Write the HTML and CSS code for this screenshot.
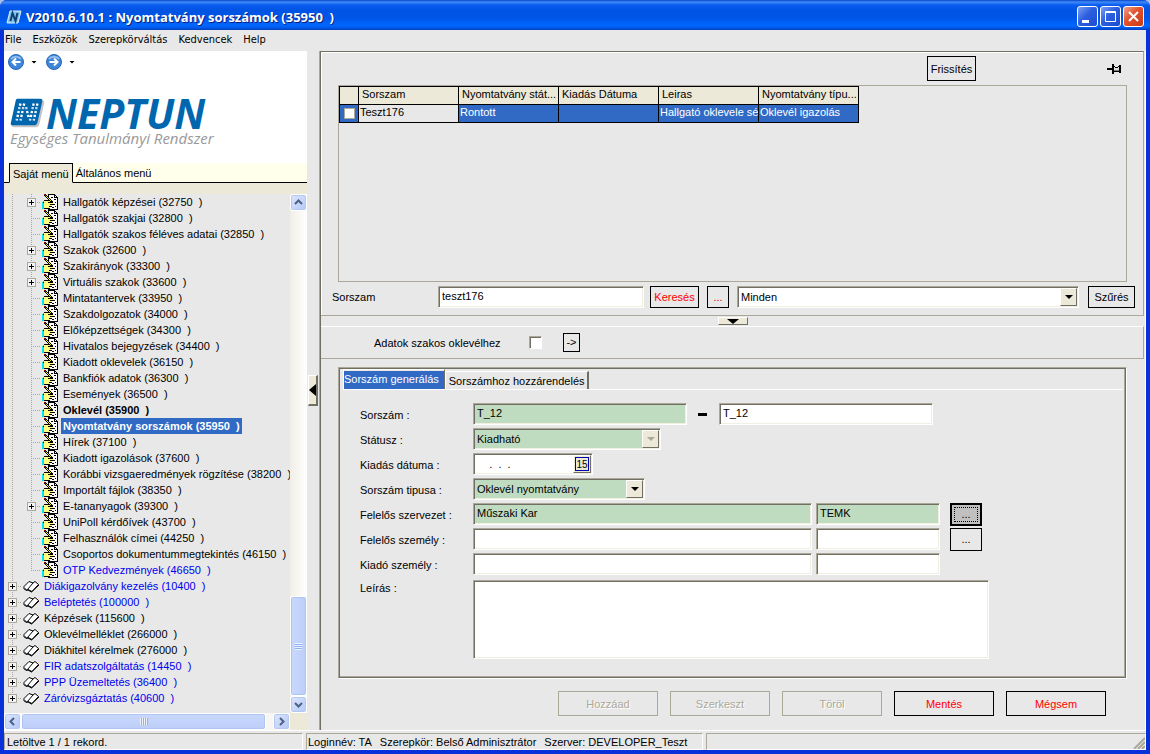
FILE: index.html
```html
<!DOCTYPE html>
<html lang="hu">
<head>
<meta charset="utf-8">
<title>Nyomtatvány sorszámok</title>
<link rel="stylesheet" href="styles.css">
</head>
<body>
<svg class="defs" width="0" height="0" aria-hidden="true">
  <symbol id="form" viewBox="0 0 18 16">
    <g shape-rendering="crispEdges">
      <path d="M7 0H14V1H15V2H16V3H17V16H7Z" fill="#000"/>
      <path d="M8 1H13V4H16V15H8Z" fill="#fff"/>
      <path d="M14 2H15V3H14Z" fill="#fff"/>
      <path d="M13 5h2v1h-2zM14 8h1v1h-1zM12 10h2v1h-2zM14 12h1v1h-1zM11 13h2v1h-2zM10 3h2v1h-2z" fill="#000"/>
      <path d="M3 7H9V8H12V9H13V11H11V13H9V14H3Z" fill="#ffff80"/>
      <path d="M1 8H2V7H3V15H1Z" fill="#00e5ee"/>
      <path d="M3 6h4v1H3zM7 8h5v1H7zM9 10h4v1H9zM8 12h3v1H8zM3 14h6v1H3zM2 8h1v1H2z" fill="#000"/>
      <path d="M3 0h2v1h1v1h1v1h1v1h1v1h1v1h1v1h1v2h-2v-1h-1v-1h-1v-1h-1v-1h-1v-1h-1v-1h-1v-1h-1z" fill="#000"/>
      <path d="M5 2h1v1h1v1h1v1h1v1h1v1h-1v-1h-1v-1h-1v-1h-1v-1h-1z" fill="#ffe800"/>
      <path d="M3 0h1v1h1v1h-1v-1h-1z" fill="#c00020"/>
    </g>
  </symbol>
  <symbol id="book" viewBox="0 0 18 16">
    <path d="M1.500 9L7 3.500L11 5L13 3.500L16.500 6.500L10 13.500L6 11.500L4.500 12Z" fill="#fff" stroke="#000"/>
    <path d="M11 5L5.500 11.500M1.500 10.500L4.500 12.500L6 12L9.500 14L17 7" fill="none" stroke="#000"/>
  </symbol>
  <symbol id="chev" viewBox="0 0 9 9"><path d="M1 6L4.500 2.500L8 6" fill="none" stroke="#4d6185" stroke-width="2"/></symbol>
</svg>

<div class="window">
  <header class="titlebar">
    <svg class="app-icon" viewBox="0 0 16 14" aria-hidden="true"><path d="M4 1H15L12 13H1Z" fill="#7cc4e8" stroke="#d8f0fa"/><path d="M4.500 11L6.500 3L9.500 11L11.500 3" fill="none" stroke="#123f78" stroke-width="2"/></svg>
    <h1>V2010.6.10.1 : Nyomtatvány sorszámok (35950&nbsp;&nbsp;)</h1>
    <div class="win-buttons">
      <button aria-label="Kis méret"><svg viewBox="0 0 19 19"><path d="M4 14.500h7" stroke="#fff" stroke-width="3"/></svg></button>
      <button aria-label="Teljes méret"><svg viewBox="0 0 19 19"><path d="M4.500 4.500h10v10h-10zM4 5.500h11" fill="none" stroke="#fff"/></svg></button>
      <button class="close" aria-label="Bezárás"><svg viewBox="0 0 19 19"><path d="M5 5l9 9M14 5l-9 9" stroke="#fff" stroke-width="2"/></svg></button>
    </div>
  </header>

  <div class="client">
    <nav class="menubar">
      <button>File</button><button>Eszközök</button><button>Szerepkörváltás</button><button>Kedvencek</button><button>Help</button>
    </nav>

    <div class="main">
      <aside class="sidebar">
        <div class="brand">
          <div class="history">
            <button aria-label="Vissza"><svg width="16" height="16" viewBox="0 0 16 16"><circle cx="8" cy="8" r="7.500" fill="#3d86d8" stroke="#2a66b8"/><path d="M3 5a6 5 0 0 1 10 0" fill="none" stroke="#8fbff0" stroke-width="2"/><path d="M12.500 8H5M8 4.500L4.500 8L8 11.500" fill="none" stroke="#fff" stroke-width="2"/></svg></button>
            <i class="tri"></i>
            <button aria-label="Előre"><svg width="16" height="16" viewBox="0 0 16 16"><circle cx="8" cy="8" r="7.500" fill="#3d86d8" stroke="#2a66b8"/><path d="M3 5a6 5 0 0 1 10 0" fill="none" stroke="#8fbff0" stroke-width="2"/><path d="M3.500 8H11M8 4.500L11.500 8L8 11.500" fill="none" stroke="#fff" stroke-width="2"/></svg></button>
            <i class="tri"></i>
          </div>
          <div class="logo">
            <svg width="36" height="32" viewBox="0 0 38 32" aria-hidden="true">
              <path d="M9 3H34Q37 3 36 6L31 28Q30 31 27 31H4Q1 31 2 28Z" fill="#c4c4c8"/>
              <path d="M8 1H32Q35 1 34 4L29 26Q28 29 25 29H3Q0 29 1 26L6 3Q6 1 8 1Z" fill="#0066ae"/>
              <g fill="none" stroke="#fff" stroke-width="2.500" stroke-dasharray="2.500 1.500">
                <path d="M11 6L7 24M15 6L11 24M25 6L21 24M29 6L25 24M17 10L20 22"/>
              </g>
              <path d="M8 12H30M7 17H28M6 22H27" stroke="#0066ae"/>
            </svg>
            <strong>NEPTUN</strong>
          </div>
          <p>Egységes Tanulmányi Rendszer</p>
        </div>
        <div class="side-tabs" role="tablist">
          <button role="tab" aria-selected="true">Saját menü</button><button role="tab">Általános menü</button>
        </div>
        <div class="side-strip"></div>
        <div class="tree-area">
          <ul class="tree">
            <li><i class="c1"></i><i class="c2"><button aria-label="Kibontás"></button></i><svg><use href="#form"/></svg><a href="#">Hallgatók képzései (32750&nbsp;&nbsp;)</a></li>
            <li><i class="c1"></i><i class="c2"></i><svg><use href="#form"/></svg><a href="#">Hallgatók szakjai (32800&nbsp;&nbsp;)</a></li>
            <li><i class="c1"></i><i class="c2"></i><svg><use href="#form"/></svg><a href="#">Hallgatók szakos féléves adatai (32850&nbsp;&nbsp;)</a></li>
            <li><i class="c1"></i><i class="c2"><button aria-label="Kibontás"></button></i><svg><use href="#form"/></svg><a href="#">Szakok (32600&nbsp;&nbsp;)</a></li>
            <li><i class="c1"></i><i class="c2"><button aria-label="Kibontás"></button></i><svg><use href="#form"/></svg><a href="#">Szakirányok (33300&nbsp;&nbsp;)</a></li>
            <li><i class="c1"></i><i class="c2"><button aria-label="Kibontás"></button></i><svg><use href="#form"/></svg><a href="#">Virtuális szakok (33600&nbsp;&nbsp;)</a></li>
            <li><i class="c1"></i><i class="c2"></i><svg><use href="#form"/></svg><a href="#">Mintatantervek (33950&nbsp;&nbsp;)</a></li>
            <li><i class="c1"></i><i class="c2"></i><svg><use href="#form"/></svg><a href="#">Szakdolgozatok (34000&nbsp;&nbsp;)</a></li>
            <li><i class="c1"></i><i class="c2"></i><svg><use href="#form"/></svg><a href="#">Előképzettségek (34300&nbsp;&nbsp;)</a></li>
            <li><i class="c1"></i><i class="c2"></i><svg><use href="#form"/></svg><a href="#">Hivatalos bejegyzések (34400&nbsp;&nbsp;)</a></li>
            <li><i class="c1"></i><i class="c2"></i><svg><use href="#form"/></svg><a href="#">Kiadott oklevelek (36150&nbsp;&nbsp;)</a></li>
            <li><i class="c1"></i><i class="c2"></i><svg><use href="#form"/></svg><a href="#">Bankfiók adatok (36300&nbsp;&nbsp;)</a></li>
            <li><i class="c1"></i><i class="c2"></i><svg><use href="#form"/></svg><a href="#">Események (36500&nbsp;&nbsp;)</a></li>
            <li><i class="c1"></i><i class="c2"></i><svg><use href="#form"/></svg><a href="#" class="bold">Oklevél (35900&nbsp;&nbsp;)</a></li>
            <li><i class="c1"></i><i class="c2"></i><svg><use href="#form"/></svg><a href="#" class="bold selected">Nyomtatvány sorszámok (35950&nbsp;&nbsp;)</a></li>
            <li><i class="c1"></i><i class="c2"></i><svg><use href="#form"/></svg><a href="#">Hírek (37100&nbsp;&nbsp;)</a></li>
            <li><i class="c1"></i><i class="c2"></i><svg><use href="#form"/></svg><a href="#">Kiadott igazolások (37600&nbsp;&nbsp;)</a></li>
            <li><i class="c1"></i><i class="c2"></i><svg><use href="#form"/></svg><a href="#">Korábbi vizsgaeredmények rögzítése (38200&nbsp;&nbsp;)</a></li>
            <li><i class="c1"></i><i class="c2"></i><svg><use href="#form"/></svg><a href="#">Importált fájlok (38350&nbsp;&nbsp;)</a></li>
            <li><i class="c1"></i><i class="c2"><button aria-label="Kibontás"></button></i><svg><use href="#form"/></svg><a href="#">E-tananyagok (39300&nbsp;&nbsp;)</a></li>
            <li><i class="c1"></i><i class="c2"></i><svg><use href="#form"/></svg><a href="#">UniPoll kérdőívek (43700&nbsp;&nbsp;)</a></li>
            <li><i class="c1"></i><i class="c2"></i><svg><use href="#form"/></svg><a href="#">Felhasználók címei (44250&nbsp;&nbsp;)</a></li>
            <li><i class="c1"></i><i class="c2"></i><svg><use href="#form"/></svg><a href="#">Csoportos dokumentummegtekintés (46150&nbsp;&nbsp;)</a></li>
            <li><i class="c1"></i><i class="c2 end"></i><svg><use href="#form"/></svg><a href="#" class="blue">OTP Kedvezmények (46650&nbsp;&nbsp;)</a></li>
            <li><i class="c1 branch"><button aria-label="Kibontás"></button></i><svg><use href="#book"/></svg><a href="#" class="blue">Diákigazolvány kezelés (10400&nbsp;&nbsp;)</a></li>
            <li><i class="c1 branch"><button aria-label="Kibontás"></button></i><svg><use href="#book"/></svg><a href="#" class="blue">Beléptetés (100000&nbsp;&nbsp;)</a></li>
            <li><i class="c1 branch"><button aria-label="Kibontás"></button></i><svg><use href="#book"/></svg><a href="#">Képzések (115600&nbsp;&nbsp;)</a></li>
            <li><i class="c1 branch"><button aria-label="Kibontás"></button></i><svg><use href="#book"/></svg><a href="#">Oklevélmelléklet (266000&nbsp;&nbsp;)</a></li>
            <li><i class="c1 branch"><button aria-label="Kibontás"></button></i><svg><use href="#book"/></svg><a href="#">Diákhitel kérelmek (276000&nbsp;&nbsp;)</a></li>
            <li><i class="c1 branch"><button aria-label="Kibontás"></button></i><svg><use href="#book"/></svg><a href="#" class="blue">FIR adatszolgáltatás (14450&nbsp;&nbsp;)</a></li>
            <li><i class="c1 branch"><button aria-label="Kibontás"></button></i><svg><use href="#book"/></svg><a href="#" class="blue">PPP Üzemeltetés (36400&nbsp;&nbsp;)</a></li>
            <li><i class="c1 branch end"><button aria-label="Kibontás"></button></i><svg><use href="#book"/></svg><a href="#" class="blue">Záróvizsgáztatás (40600&nbsp;&nbsp;)</a></li>
          </ul>
          <div class="scroll vertical">
            <button aria-label="Fel"><svg><use href="#chev"/></svg></button>
            <span class="thumb"><i class="grip"></i></span>
            <button aria-label="Le"><svg class="down"><use href="#chev"/></svg></button>
          </div>
          <div class="scroll horizontal">
            <button aria-label="Balra"><svg class="left"><use href="#chev"/></svg></button>
            <span class="thumb"><i class="grip"></i></span>
            <button aria-label="Jobbra"><svg class="right"><use href="#chev"/></svg></button>
          </div>
          <div class="corner"></div>
        </div>
      </aside>

      <div class="v-splitter"><button aria-label="Menü elrejtése"><svg width="7" height="12" viewBox="0 0 7 12"><path d="M7 0V12L0 6Z"/></svg></button></div>

      <main class="workspace">
        <section class="list-panel">
          <div class="list-head">
            <button class="btn refresh">Frissítés</button>
            <button class="pin" aria-label="Rögzítés"><svg width="15" height="12" viewBox="0 0 15 12" shape-rendering="crispEdges"><path d="M0 5h5v2H0zM5 1h2v10H5zM7 3h1v1H7zM8 4h3v1H8zM11 3h1v1h-1zM12 2h2v8h-2zM7 8h5v1H7z"/><path d="M7 5h5v2H7z" fill="#ddd"/><path d="M7 7h5v1H7z" fill="#777"/></svg></button>
          </div>
          <div class="grid">
            <table>
              <colgroup><col class="check-col"><col><col><col><col><col></colgroup>
              <thead><tr><th></th><th>Sorszam</th><th>Nyomtatvány stát...</th><th>Kiadás Dátuma</th><th>Leiras</th><th>Nyomtatvány típu...</th></tr></thead>
              <tbody><tr><td class="pick"><input type="checkbox" aria-label="Kijelölés"></td><td class="current">Teszt176</td><td>Rontott</td><td></td><td>Hallgató oklevele sé</td><td>Oklevél igazolás</td></tr></tbody>
            </table>
          </div>
          <div class="search">
            <label for="q">Sorszam</label>
            <input id="q" class="field" type="text" value="teszt176">
            <button class="btn red find">Keresés</button>
            <button class="btn red more">...</button>
            <span class="combo"><select aria-label="Szűrő"><option>Minden</option></select><i class="drop"></i></span>
            <button class="btn filter">Szűrés</button>
          </div>
        </section>

        <div class="h-splitter"><button aria-label="Lista elrejtése"><svg width="12" height="5" viewBox="0 0 12 5"><path d="M0 0H12L6 5Z"/></svg></button></div>

        <section class="option-panel">
          <label for="adatok">Adatok szakos oklevélhez</label>
          <input id="adatok" type="checkbox" class="box">
          <button class="btn go">-&gt;</button>
        </section>

        <section class="detail-panel">
          <div class="frame">
            <div class="tabs" role="tablist">
              <button role="tab" aria-selected="true"><span>Sorszám generálás</span></button>
              <button role="tab">Sorszámhoz hozzárendelés</button>
            </div>
            <form class="form">
              <div class="row"><label for="s1">Sorszám :</label><input id="s1" class="field green w-num" value="T_12"><span class="dash"></span><input class="field w-num" aria-label="Sorszám vége" value="T_12"></div>
              <div class="row"><label for="s2">Státusz :</label><span class="combo green off w-status"><select id="s2"><option>Kiadható</option></select><i class="drop"></i></span></div>
              <div class="row"><label for="s3">Kiadás dátuma :</label><span class="combo w-date"><input id="s3" type="text" value="&nbsp;&nbsp;&nbsp;&nbsp;.&nbsp;&nbsp;.&nbsp;&nbsp;."><button type="button" class="cal">15</button></span></div>
              <div class="row"><label for="s4">Sorszám tipusa :</label><span class="combo green w-type"><select id="s4"><option>Oklevél nyomtatvány</option></select><i class="drop"></i></span></div>
              <div class="row"><label for="s5">Felelős szervezet :</label><input id="s5" class="field green w-name" value="Műszaki Kar"><input class="field green w-code" aria-label="Szervezet kódja" value="TEMK"><button type="button" class="btn pickbtn focused"><span>...</span></button></div>
              <div class="row"><label for="s6">Felelős személy :</label><input id="s6" class="field w-name"><input class="field w-code" aria-label="Személy kódja"><button type="button" class="btn pickbtn">...</button></div>
              <div class="row"><label for="s7">Kiadó személy :</label><input id="s7" class="field w-name"><input class="field w-code" aria-label="Kiadó kódja"></div>
              <div class="row note"><label for="s8">Leírás :</label><textarea id="s8" class="field"></textarea></div>
            </form>
          </div>
          <div class="actions">
            <button class="btn" disabled>Hozzáad</button>
            <button class="btn" disabled>Szerkeszt</button>
            <button class="btn" disabled>Töröl</button>
            <button class="btn red">Mentés</button>
            <button class="btn red">Mégsem</button>
          </div>
        </section>
      </main>
    </div>

    <footer class="status">
      <span class="st1">Letöltve 1 / 1 rekord.</span>
      <span class="st2"><b>Loginnév: TA</b><b>Szerepkör: Belső Adminisztrátor</b><b>Szerver: DEVELOPER_Teszt</b></span>
      <span class="st3"><svg width="12" height="13" viewBox="0 0 12 13"><path d="M1 13L12 2M5 13L12 6M9 13L12 10" stroke="#aca899" stroke-width="2"/></svg></span>
    </footer>
  </div>
</div>
</body>
</html>
```
FILE: styles.css
```css
:root {
  --face: #e8e8e8;
  --beige: #ece9d8;
  --mid: #aca899;
  --dark: #716f64;
  --pale: #f1efe2;
  --sel: #316ac5;
  --green: #c0dcc0;
}
* { box-sizing: border-box; }
body { margin: 0; background: #a9bfe8; color: #000; font: 11px/16px "Liberation Sans", Arial, sans-serif; }
button, input, select, textarea { font: inherit; color: inherit; margin: 0; padding: 0; border: 0; border-radius: 0; background: none; outline: 0; }
button { white-space: nowrap; }
.defs { position: absolute; }

.window { display: flex; flex-direction: column; min-height: 100vh; border-radius: 7px 7px 0 0; overflow: hidden; background: #0831d9; }
.titlebar { display: flex; align-items: center; gap: 4px; height: 30px; padding: 3px 6px 0 6px; background: linear-gradient(#0842c8 0, #3f8cf8 2px, #0a5cf0 5px, #0054e3 10px, #0055e8 18px, #0066ff 25px, #0060f5 27px, #0040c0 30px); }
.titlebar h1 { flex: 1; margin: 0; color: #fff; font: bold 13px/18px "Open Sans", "Noto Sans", sans-serif; text-shadow: 1px 1px #0a1f80; white-space: nowrap; }
.app-icon { width: 16px; height: 14px; }
.win-buttons { display: flex; gap: 2px; }
.win-buttons button { width: 21px; height: 21px; border: 1px solid #fff; border-radius: 3px; background: linear-gradient(135deg, #7aa0f4, #2c5ee0 45%, #1c4cd0); }
.win-buttons .close { background: linear-gradient(135deg, #f0a088, #e0502c 45%, #c83c14); }
.win-buttons svg { display: block; width: 19px; height: 19px; }

.client { flex: 1; display: flex; flex-direction: column; margin: 0 4px 4px; background: var(--face); }
.menubar { display: flex; gap: 11px; height: 21px; padding: 0 1px 2px; font: 11px/16px "DejaVu Sans Condensed", "DejaVu Sans", sans-serif; }
.main { flex: 1; display: flex; }

.sidebar { display: flex; flex-direction: column; width: 303px; flex: none; }
.brand { height: 112px; padding: 3px 4px 0; background: #fff; }
.history { display: flex; align-items: center; height: 16px; }
.history button, .history svg { display: block; width: 16px; height: 16px; }
.tri { width: 6px; height: 3px; margin: 0 9px 0 7px; background: #000; clip-path: polygon(0 0, 100% 0, 50% 100%); }
.logo { display: flex; align-items: center; height: 34px; margin-top: 26px; padding-left: 2px; }
.logo strong { color: #0066ae; font: italic bold 41px/34px "Open Sans", "Noto Sans", sans-serif; }
.brand p { margin: 0 2px; color: #999; font: italic 15px/16px "Open Sans", "Noto Sans", sans-serif; white-space: nowrap; }
.side-tabs { display: flex; height: 20px; padding-left: 5px; background: #ffffec; box-shadow: inset 0 -1px #000; }
.side-tabs button { padding: 0 3px; line-height: 20px; }
.side-tabs [aria-selected] { border: 1px solid #000; border-bottom-color: var(--beige); background: var(--beige); }
.side-strip { height: 11px; background: var(--beige); }

.tree-area { flex: 1; display: grid; grid-template-columns: 1fr 17px; grid-template-rows: 1fr 17px; }
.tree { margin: 0; padding: 0; list-style: none; overflow: hidden; }
.tree li { display: flex; align-items: center; height: 16px; }
.tree i { display: block; width: 18px; height: 16px; flex: none; background: repeating-linear-gradient(var(--mid) 0 1px, transparent 1px 2px) 8px 0 / 1px 16px no-repeat; }
.tree .c2, .tree .branch { padding-top: 4px; background: repeating-linear-gradient(var(--mid) 0 1px, transparent 1px 2px) 9px 0 / 1px 16px no-repeat, repeating-linear-gradient(90deg, var(--mid) 0 1px, transparent 1px 2px) 9px 8px / 10px 1px no-repeat; }
.tree .c2 { width: 19px; padding-left: 5px; }
.tree .branch { padding-left: 4px; background-position: 8px 0, 8px 8px; }
.tree .end { background-size: 1px 9px, 10px 1px; }
.tree button { display: block; width: 9px; height: 9px; border: 1px solid var(--mid); background: linear-gradient(#000, #000) 1px 3px / 5px 1px no-repeat, linear-gradient(#000, #000) 3px 1px / 1px 5px no-repeat, #f4f4f4; }
.tree svg { width: 18px; height: 16px; flex: none; }
.tree a { margin-left: 2px; padding: 0 2px; color: #000; text-decoration: none; white-space: nowrap; line-height: 16px; }
.tree .blue { color: #0000f0; }
.tree .bold { font-weight: bold; }
.tree .selected { background: var(--sel); color: #fff; }

.scroll { display: flex; background: #f7f6f1; }
.scroll.vertical { flex-direction: column; background: linear-gradient(90deg, #f0eee6, #fff); }
.scroll button { display: grid; place-items: center; width: 17px; height: 17px; flex: none; border: 1px solid #fff; border-radius: 3px; background: linear-gradient(135deg, #dce6fe, #b4c8f6); box-shadow: inset 0 0 0 1px #b4c8f0; }
.scroll svg { width: 9px; height: 9px; }
.scroll .down { rotate: 180deg; }
.scroll .left { rotate: -90deg; }
.scroll .right { rotate: 90deg; }
.thumb { display: grid; place-items: center; border: 1px solid #fff; border-radius: 3px; background: linear-gradient(90deg, #c9d8fd, #bccdf8); box-shadow: inset 0 0 0 1px #b0c4f2; }
.vertical .thumb { height: 100px; margin-top: auto; }
.horizontal .thumb { width: 245px; margin-right: auto; background: linear-gradient(#c9d8fd, #bccdf8); }
.grip { width: 7px; height: 7px; background: repeating-linear-gradient(#eef4fe 0 1px, #8cb0f8 1px 2px); }
.horizontal .grip { width: 8px; background: repeating-linear-gradient(90deg, #eef4fe 0 1px, #8cb0f8 1px 2px); }
.corner { background: var(--beige); }

.v-splitter { display: flex; align-items: center; width: 12px; flex: none; padding-left: 1px; }
.v-splitter button { display: grid; place-items: center; width: 10px; height: 31px; background: var(--beige); border: 1px solid #fff; border-right: 2px solid var(--dark); border-bottom: 2px solid var(--dark); }
.h-splitter { display: flex; justify-content: center; height: 10px; padding-top: 1px; }
.h-splitter button { display: grid; place-items: center; width: 30px; height: 8px; background: var(--beige); border: 1px solid #fff; border-right-color: var(--dark); border-bottom-color: var(--dark); }
.h-splitter svg, .v-splitter svg { display: block; }

.workspace { flex: 1; display: flex; flex-direction: column; min-width: 0; border-left: 1px solid var(--mid); box-shadow: inset 1px 0 var(--dark), inset -1px 0 #fff; padding: 0 2px 0 1px; }
.list-panel { flex: 1; display: flex; flex-direction: column; gap: 4px; padding: 4px 8px 7px 11px; border-top: 1px solid var(--dark); border-bottom: 1px solid var(--mid); border-right: 1px solid var(--mid); box-shadow: inset 1px 1px #fff; }
.list-head { display: flex; justify-content: flex-end; align-items: center; padding-right: 13px; }
.pin { margin-left: 131px; }
.pin svg { display: block; }
.btn { border: 1px solid #000; background: var(--face); height: 22px; text-align: center; }
.red { color: #f00; }
.refresh { width: 49px; height: 25px; }
.grid { flex: 1; min-height: 100px; margin: 0 8px 0 6px; border: 1px solid var(--mid); }
table { width: 520px; table-layout: fixed; border-collapse: collapse; }
col { width: 100px; }
.check-col { width: 19px; }
th, td { height: 18px; padding: 0 0 2px; border: 1px solid #000; overflow: hidden; white-space: nowrap; line-height: 15px; text-align: left; font-weight: normal; }
th { padding-left: 3px; background: var(--beige); }
td { padding-left: 1px; background: var(--sel); color: #fff; }
.current { background: var(--face); color: #000; }
.pick { padding-bottom: 0; }
.pick input { appearance: none; display: block; width: 11px; height: 11px; margin: 0 auto 0 3px; background: #fff; border: 1px solid var(--mid); }

.field, .combo { height: 22px; background: #fff; border: 1px solid; border-color: var(--mid) #fff #fff var(--mid); box-shadow: inset 1px 1px var(--dark), inset -1px -1px var(--pale); padding: 0 3px 2px; }
.search { display: flex; align-items: center; }
.search label { width: 106px; }
.search .field { width: 206px; }
.search .find { width: 49px; margin: 0 8px 0 6px; }
.search .more { width: 22px; margin-right: 8px; }
.search .combo { flex: 1; margin-right: 9px; }
.search .filter { width: 47px; }
.combo { position: relative; display: flex; padding: 1px; }
.combo select, .combo > input { appearance: none; width: 100%; padding: 0 2px; height: 18px; }
.drop { position: absolute; top: 1px; right: 1px; width: 17px; height: 18px; pointer-events: none; background: var(--beige); border: 1px solid; border-color: #fff var(--dark) var(--dark) #fff; }
.drop::after { content: ""; display: block; width: 8px; height: 4px; margin: 6px 4px; background: #000; clip-path: polygon(0 0, 100% 0, 50% 100%); }
.off .drop::after { background: var(--mid); }
.green { background: var(--green); }

.option-panel { display: flex; align-items: center; height: 33px; padding-left: 53px; border-top: 1px solid #fff; border-right: 1px solid var(--mid); border-bottom: 1px solid var(--mid); }
.option-panel label { width: 155px; }
.box { appearance: none; width: 13px; height: 13px; background: #fff; border: 1px solid; border-color: var(--mid) #fff #fff var(--mid); box-shadow: inset 1px 1px var(--dark); }
.go { width: 17px; height: 19px; margin-left: 21px; line-height: 17px; }

.detail-panel { padding: 8px 17px 14px; }
.frame { padding-bottom: 19px; border: 1px solid; border-color: var(--mid) #fff #fff var(--mid); box-shadow: inset 1px 1px var(--dark), inset -1px -1px var(--dark), inset -2px -2px var(--mid); }
.tabs { display: flex; align-items: flex-end; height: 22px; margin: 0 3px 0 4px; border-bottom: 1px solid #fff; }
.tabs button { height: 18px; padding: 0 2px 0 3px; border: 1px solid #fff; border-right: 2px solid var(--dark); border-bottom: 0; }
.tabs [aria-selected] { height: 20px; padding: 1px 0 0; border-right-width: 1px; }
.tabs span { display: block; padding: 0 5px 2px 0; background: var(--sel); color: #fff; }
.form { display: flex; flex-direction: column; gap: 3px; padding: 13px 21px 0; }
.row { display: flex; align-items: center; height: 22px; }
.row > label { width: 113px; flex: none; padding-top: 2px; }
.w-num { width: 214px; }
.dash { width: 9px; height: 3px; margin: 0 12px 0 11px; background: #000; }
.w-status { width: 188px; }
.w-date { width: 120px; }
.w-type { width: 172px; }
.w-name { width: 339px; margin-right: 4px; }
.w-code { width: 124px; }
.cal { width: 18px; height: 18px; flex: none; background: var(--beige); border: 1px solid; border-color: #fff var(--dark) var(--dark) #fff; box-shadow: inset 0 0 0 1px var(--beige), inset 0 0 0 2px #00a; font-size: 10px; line-height: 15px; }
.pickbtn { width: 32px; height: 23px; margin-left: 10px; }
.focused { border-width: 2px; background: #c0c0c0; padding: 2px; }
.focused span { display: block; height: 15px; line-height: 13px; border: 1px dotted #000; }
.note { height: auto; align-items: flex-start; padding-top: 2px; }
.note label { padding: 0; }
.note textarea { width: 516px; height: 79px; resize: none; }
.actions { display: flex; justify-content: flex-end; gap: 12px; padding: 12px 21px 0 0; }
.actions .btn { width: 100px; height: 25px; }
.btn:disabled { color: var(--mid); border-color: var(--mid); text-shadow: 1px 1px #fff; }

.status { display: flex; gap: 3px; height: 20px; padding-top: 2px; border-top: 1px solid #fff; }
.status > span { display: flex; height: 17px; padding: 0 2px; border: 1px solid; border-color: var(--mid) #fff #fff var(--mid); white-space: nowrap; line-height: 16px; }
.status b { font-weight: normal; margin-right: 8px; }
.status .st1 { width: 299px; }
.status .st2 { width: 397px; padding-left: 1px; }
.status .st3 { flex: 1; justify-content: flex-end; align-items: flex-end; padding: 0; }
```
